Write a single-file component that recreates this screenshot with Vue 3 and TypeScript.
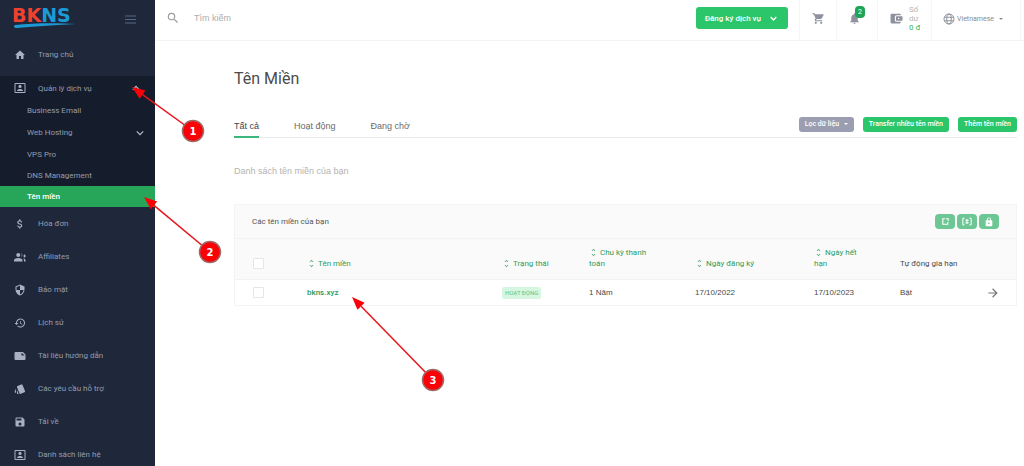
<script setup lang="ts">
import { ref } from 'vue'

interface MenuItem {
  label: string
  icon: string
}

interface SubItem {
  label: string
  active?: boolean
  expandable?: boolean
}

interface Marker {
  n: number
  x: number
  y: number
  tipX: number
  tipY: number
}

const icons: Record<string, string> = {
  home: 'M10 20v-6h4v6h5v-8h3L12 3 2 12h3v8z',
  contact: 'M21 2H3a2 2 0 0 0-2 2v16a2 2 0 0 0 2 2h18a2 2 0 0 0 2-2V4a2 2 0 0 0-2-2zm0 18H3V4h18v16zM12 12a3.2 3.2 0 1 0 0-6.400 3.200 3.200 0 0 0 0 6.400zm6 5.500c0-2.500-4-3.700-6-3.700s-6 1.200-6 3.700V18h12z',
  dollar: 'M11.800 10.900c-2.270-.59-3-1.200-3-2.150 0-1.090 1.010-1.850 2.700-1.850 1.780 0 2.440.85 2.500 2.100h2.210c-.07-1.720-1.120-3.300-3.210-3.810V3h-3v2.160c-1.940.42-3.500 1.680-3.500 3.610 0 2.310 1.910 3.460 4.700 4.130 2.500.6 3 1.480 3 2.410 0 .69-.49 1.790-2.700 1.790-2.060 0-2.870-.92-2.980-2.100h-2.200c.12 2.190 1.760 3.420 3.680 3.830V21h3v-2.150c1.950-.37 3.500-1.500 3.500-3.550 0-2.840-2.430-3.810-4.700-4.400z',
  affiliates: 'M8.500 12a4 4 0 1 0 0-8 4 4 0 0 0 0 8zm0 2C5.500 14 0 15.500 0 18.500V21h17v-2.500C17 15.500 11.500 14 8.500 14zM14 4.200a6 6 0 0 1 0 7.500 4 4 0 0 0 0-7.500zm4 10.300c1.300 1 2 2.300 2 4V21h3v-2.500c0-2-2.200-3.300-5-4zM20 7v2h-1.500v2H20v2h2v-2h2V9h-2V7z',
  shield: 'M12 1 3 5v6c0 5.550 3.840 10.740 9 12 5.160-1.260 9-6.450 9-12V5l-9-4zm0 10.990h7c-.53 4.120-3.280 7.790-7 8.940V12H5V6.300l7-3.110v8.800z',
  history: 'M13 3a9 9 0 0 0-9 9H1l3.890 3.890.07.14L9 12H6a7 7 0 1 1 2.060 4.940l-1.420 1.420A9 9 0 1 0 13 3zm-1 5v5l4.280 2.540.72-1.210-3.500-2.080V8H12z',
  note: 'M3 4a2 2 0 0 0-2 2v12a2 2 0 0 0 2 2h18a2 2 0 0 0 2-2V9l-5-5H3zm12 1.500L21.500 11H15z',
  tickets: 'M2.500 19.600l1.400.6v-9L1.400 17c-.4 1 .1 2.200 1.100 2.600zM22 15.900 17.100 4a2 2 0 0 0-2.600-1.100L7.100 6A2 2 0 0 0 6 8.500l5 12a2 2 0 0 0 2.600 1.100l7.400-3.100a2 2 0 0 0 1-2.600zM5.900 19.800c0 1.100.9 2 2 2h1.500l-3.500-8.400z',
  save: 'M17 3H5a2 2 0 0 0-2 2v14a2 2 0 0 0 2 2h14a2 2 0 0 0 2-2V7l-4-4zm-5 16a3 3 0 1 1 0-6 3 3 0 0 1 0 6zm3-10H5V5h10v4z',
  search: 'M15.500 14h-.79l-.28-.27A6.470 6.470 0 0 0 16 9.500 6.500 6.500 0 1 0 9.500 16c1.610 0 3.090-.59 4.230-1.570l.27.28v.79l5 4.990L20.490 19l-4.990-5zm-6 0a4.500 4.500 0 1 1 0-9 4.500 4.500 0 0 1 0 9z',
  cart: 'M7 18a2 2 0 1 0 0 4 2 2 0 0 0 0-4zM1 2v2h2l3.600 7.590-1.350 2.450C4.520 15.370 5.480 17 7 17h12v-2H7.420l1.130-2h7.450c.75 0 1.410-.41 1.750-1.030L21.700 4.960A1 1 0 0 0 20.830 4H5.210l-.94-2H1zm16 16a2 2 0 1 0 0 4 2 2 0 0 0 0-4z',
  bell: 'M12 22a2 2 0 0 0 2-2h-4c0 1.100.9 2 2 2zm6-6v-5c0-3.070-1.630-5.640-4.500-6.320V4a1.500 1.500 0 0 0-3 0v.68C7.640 5.360 6 7.920 6 11v5l-2 2v1h16v-1l-2-2z',
  wallet: 'M3 3a2 2 0 0 0-2 2v14a2 2 0 0 0 2 2h15a2 2 0 0 0 2-2v-1h-8a3 3 0 0 1-3-3V9a3 3 0 0 1 3-3h8V5a2 2 0 0 0-2-2zm9 5a1 1 0 0 0-1 1v6a1 1 0 0 0 1 1h11V8zm4 5.500a1.500 1.500 0 1 1 0-3 1.500 1.500 0 0 1 0 3z',
  lock: 'M18 8h-1V6A5 5 0 0 0 7 6v2H6a2 2 0 0 0-2 2v10a2 2 0 0 0 2 2h12a2 2 0 0 0 2-2V10a2 2 0 0 0-2-2zM9 6a3 3 0 0 1 6 0v2H9V6zm3 11a2 2 0 1 1 0-4 2 2 0 0 1 0 4z',
  sort: 'M12 5.830 15.170 9l1.410-1.410L12 3 7.410 7.590 8.830 9 12 5.830zm0 12.340L8.830 15l-1.410 1.410L12 21l4.590-4.590L15.170 15 12 18.170z',
  arrow: 'm12 4-1.410 1.410L16.170 11H4v2h12.170l-5.580 5.590L12 20l8-8z',
}

const subItems: SubItem[] = [
  { label: 'Business Email' },
  { label: 'Web Hosting', expandable: true },
  { label: 'VPS Pro' },
  { label: 'DNS Management' },
  { label: 'Tên miền', active: true },
]

const menu: MenuItem[] = [
  { label: 'Hóa đơn', icon: 'dollar' },
  { label: 'Affiliates', icon: 'affiliates' },
  { label: 'Bảo mật', icon: 'shield' },
  { label: 'Lịch sử', icon: 'history' },
  { label: 'Tài liệu hướng dẫn', icon: 'note' },
  { label: 'Các yêu cầu hỗ trợ', icon: 'tickets' },
  { label: 'Tải về', icon: 'save' },
  { label: 'Danh sách liên hệ', icon: 'contact' },
]

const tabs = ['Tất cả', 'Hoạt động', 'Đang chờ']
const activeTab = ref('Tất cả')
const query = ref('')

const columns = [
  { label: 'Tên miền', key: 'col-name' },
  { label: 'Trạng thái', key: 'col-status' },
  { label: 'Chu kỳ thanh toán', key: 'col-cycle' },
  { label: 'Ngày đăng ký', key: 'col-created' },
  { label: 'Ngày hết hạn', key: 'col-expires' },
]

const domains = [
  { name: 'bkns.xyz', status: 'HOẠT ĐỘNG', cycle: '1 Năm', created: '17/10/2022', expires: '17/10/2023', renew: 'Bật' },
]

const markers: Marker[] = [
  { n: 1, x: 193, y: 131, tipX: 132, tipY: 87 },
  { n: 2, x: 210, y: 252, tipX: 144, tipY: 197 },
  { n: 3, x: 433, y: 380, tipX: 352, tipY: 297 },
]

function geometry(m: Marker) {
  const dx = m.tipX - m.x
  const dy = m.tipY - m.y
  const len = Math.hypot(dx, dy)
  const ux = dx / len
  const uy = dy / len
  const bx = m.tipX - ux * 13
  const by = m.tipY - uy * 13
  return {
    bx,
    by,
    head: `${m.tipX},${m.tipY} ${bx - uy * 5},${by + ux * 5} ${bx + uy * 5},${by - ux * 5}`,
  }
}
</script>

<template>
  <div class="page">
    <aside class="sidebar">
      <div class="brand">
        <a href="#" class="logo" aria-label="BKNS">
          <svg width="68" height="34" viewBox="0 0 68 34">
            <text x="0" y="20" class="logo-text"><tspan fill="#f0412f">BK</tspan><tspan fill="#1c9ad6">NS</tspan></text>
            <path d="M3 23C22 21 45 21 64 22 45 23 25 24 5 26 2 26 1 24 3 23z" fill="#1c9ad6" />
          </svg>
        </a>
        <button class="burger" aria-label="Menu">
          <svg width="11" height="9" viewBox="0 0 11 9"><path d="M0 1h11M0 4.500h11M0 8h11" stroke="#566788" stroke-width="1" /></svg>
        </button>
      </div>
      <nav>
        <a href="#" class="item">
          <svg class="ico" viewBox="0 0 24 24"><path :d="icons.home" /></svg>
          <span>Trang chủ</span>
        </a>
        <div class="group">
          <a href="#" class="item head">
            <svg class="ico" viewBox="0 0 24 24"><path :d="icons.contact" /></svg>
            <span>Quản lý dịch vụ</span>
            <svg class="chev" viewBox="0 0 10 10"><path d="M1 7l4-4 4 4" /></svg>
          </a>
          <a v-for="s in subItems" :key="s.label" href="#" class="sub" :class="{ active: s.active, tall: s.expandable }">
            <span>{{ s.label }}</span>
            <svg v-if="s.expandable" class="chev" viewBox="0 0 10 10"><path d="M1 3l4 4 4-4" /></svg>
          </a>
        </div>
        <a v-for="m in menu" :key="m.label" href="#" class="item">
          <svg class="ico" viewBox="0 0 24 24"><path fill-rule="evenodd" :d="icons[m.icon]" /></svg>
          <span>{{ m.label }}</span>
        </a>
      </nav>
    </aside>

    <div class="content">
      <header class="topbar">
        <label class="search">
          <svg width="14" height="14" viewBox="0 0 24 24"><path :d="icons.search" fill="#9b9b9b" /></svg>
          <input v-model="query" type="text" placeholder="Tìm kiếm" aria-label="Tìm kiếm" />
        </label>
        <button class="order">
          Đăng ký dịch vụ
          <svg width="7" height="7" viewBox="0 0 10 10"><path d="M1 3l4 4 4-4" fill="none" stroke="#fff" stroke-width="2" /></svg>
        </button>
        <button class="cell cart" aria-label="Giỏ hàng">
          <svg width="13" height="13" viewBox="0 0 24 24"><path :d="icons.cart" /></svg>
        </button>
        <button class="cell bell" aria-label="Thông báo">
          <span class="bell-wrap">
            <svg width="13" height="13" viewBox="0 0 24 24"><path :d="icons.bell" /></svg>
            <span class="badge">2</span>
          </span>
        </button>
        <a href="#" class="cell wallet">
          <svg width="13" height="13" viewBox="0 0 24 24"><path fill-rule="evenodd" :d="icons.wallet" /></svg>
          <span class="balance"><span>Số</span><span>dư</span><span class="amount">0 đ</span></span>
        </a>
        <button class="cell lang">
          <svg width="12" height="12" viewBox="0 0 24 24"><g fill="none" stroke="#8f929d" stroke-width="2"><circle cx="12" cy="12" r="10" /><ellipse cx="12" cy="12" rx="4.500" ry="10" /><path d="M3 8.500h18M3 15.500h18" /></g></svg>
          <span>Vietnamese</span>
          <i class="caret"></i>
        </button>
      </header>

      <main>
        <h1>Tên Miền</h1>
        <div class="tabbar">
          <div class="tabs" role="tablist">
            <button v-for="t in tabs" :key="t" role="tab" :aria-selected="t === activeTab" :class="{ on: t === activeTab }" @click="activeTab = t">{{ t }}</button>
          </div>
          <div class="actions">
            <button class="btn grey">Lọc dữ liệu <i class="caret"></i></button>
            <button class="btn">Transfer nhiều tên miền</button>
            <button class="btn">Thêm tên miền</button>
          </div>
        </div>
        <p class="desc">Danh sách tên miền của bạn</p>

        <section class="card">
          <div class="card-head">
            <h2>Các tên miền của bạn</h2>
            <div class="tools">
              <button aria-label="Gia hạn">
                <svg width="9" height="9" viewBox="0 0 10 10"><path d="M4.500 2H2v6h5.500V5.500M5.500 2H8v2.500" fill="none" stroke="#fff" stroke-width="1.200" /></svg>
              </button>
              <button aria-label="Máy chủ tên">
                <svg width="10" height="9" viewBox="0 0 12 10"><path d="M3 1H1v8h2M9 1h2v8H9M4 3.500h4M4 6.500h4M6 2v6" fill="none" stroke="#fff" stroke-width="1.200" /></svg>
              </button>
              <button aria-label="Khóa">
                <svg width="10" height="10" viewBox="0 0 24 24"><path fill-rule="evenodd" :d="icons.lock" fill="#fff" /></svg>
              </button>
            </div>
          </div>
          <table>
            <colgroup>
              <col class="c-check" /><col /><col class="c-status" /><col class="c-cycle" /><col class="c-created" /><col class="c-expires" /><col class="c-renew" /><col class="c-go" />
            </colgroup>
            <thead>
              <tr>
                <th class="check"><input type="checkbox" aria-label="Chọn tất cả" /></th>
                <th v-for="c in columns" :key="c.key" :class="c.key">
                  <a href="#"><svg class="sort" viewBox="6 2 12 20"><path :d="icons.sort" /></svg>{{ c.label }}</a>
                </th>
                <th class="plain">Tự động gia hạn</th>
                <th></th>
              </tr>
            </thead>
            <tbody>
              <tr v-for="d in domains" :key="d.name">
                <td class="check"><input type="checkbox" :aria-label="d.name" /></td>
                <td><a href="#" class="name">{{ d.name }}</a></td>
                <td><span class="status-tag">{{ d.status }}</span></td>
                <td>{{ d.cycle }}</td>
                <td>{{ d.created }}</td>
                <td>{{ d.expires }}</td>
                <td>{{ d.renew }}</td>
                <td><a href="#" :aria-label="'Chi tiết ' + d.name"><svg width="14" height="14" viewBox="0 0 24 24"><path :d="icons.arrow" fill="#777" /></svg></a></td>
              </tr>
            </tbody>
          </table>
        </section>
      </main>
    </div>

    <svg class="markers" width="460" height="400" viewBox="0 0 460 400">
      <g v-for="m in markers" :key="m.n">
        <line :x1="m.x" :y1="m.y" :x2="geometry(m).bx" :y2="geometry(m).by" stroke="#e8141c" stroke-width="1.500" />
        <polygon :points="geometry(m).head" fill="#fb0007" />
        <circle :cx="m.x" :cy="m.y" r="10.500" fill="#fb0007" stroke="#9c6a66" stroke-width="1.500" />
        <text :x="m.x" :y="m.y + 4" class="marker-n">{{ m.n }}</text>
      </g>
    </svg>
  </div>
</template>

<style>
body {
  margin: 0;
  background: #fff;
}
</style>

<style scoped>
.page {
  position: relative;
  display: flex;
  height: 100vh;
  overflow: hidden;
  font-family: Roboto, "Liberation Sans", sans-serif;
  font-size: 8px;
  color: #555;
}
a {
  color: inherit;
  text-decoration: none;
}
button {
  border: 0;
  padding: 0;
  background: none;
  font: inherit;
  color: inherit;
  cursor: pointer;
}
svg {
  display: block;
  flex: none;
}

/* sidebar */
.sidebar {
  flex: none;
  width: 155px;
  background: #1e283a;
  color: #949cb1;
  overflow: hidden;
}
.brand {
  display: flex;
  align-items: center;
  justify-content: space-between;
  height: 38px;
  padding: 0 19px 0 12px;
}
.logo-text {
  font: bold 19px "DejaVu Sans", sans-serif;
}
.item {
  display: flex;
  align-items: center;
  height: 33px;
  padding: 0 11px 0 14px;
  gap: 12px;
}
.ico {
  width: 12px;
  height: 12px;
  fill: #a9b0c4;
}
.group {
  margin-top: 5px;
  background: #151c2b;
}
.item.head {
  height: 24px;
}
.chev {
  width: 8px;
  height: 8px;
  margin-left: auto;
  fill: none;
  stroke: #b9c0d0;
  stroke-width: 1.5;
}
.item.head .chev {
  margin-right: 4px;
}
.sub {
  display: flex;
  align-items: center;
  height: 21px;
  padding: 0 11px 0 27px;
}
.sub.tall {
  height: 23px;
}
.sub.active {
  background: #27a65a;
  color: #fff;
  font-weight: 500;
}

/* top bar */
.content {
  flex: 1;
  min-width: 0;
}
.topbar {
  display: flex;
  align-items: center;
  height: 40px;
  padding-right: 3px;
  border-bottom: 1px solid #f3f3f3;
}
.search {
  flex: 1;
  display: flex;
  align-items: center;
  gap: 14px;
  padding: 0 11px 4px;
}
.search input {
  flex: 1;
  min-width: 0;
  height: 20px;
  border: 0;
  padding: 0;
  outline: 0;
  background: none;
  font: 9px "Liberation Sans", sans-serif;
  color: #555;
}
.search input::placeholder {
  color: #adadad;
  opacity: 1;
}
.order {
  display: flex;
  align-items: center;
  gap: 9px;
  height: 22px;
  margin: 0 11px 4px 0;
  padding: 0 11px 0 9px;
  border-radius: 3px;
  background: #2cc66a;
  color: #fff;
  font-weight: 500;
}
.cell {
  display: flex;
  align-items: center;
  align-self: stretch;
  box-sizing: border-box;
  padding-bottom: 3px;
  border-left: 1px solid #f6f6f6;
  fill: #8f929d;
}
.cart {
  width: 37px;
  justify-content: center;
}
.bell {
  width: 41px;
  padding-left: 11px;
}
.bell-wrap {
  position: relative;
}
.badge {
  position: absolute;
  left: 7px;
  top: -6px;
  width: 10px;
  border-radius: 4px;
  background: #1ea553;
  color: #fff;
  font-size: 7px;
  line-height: 12px;
  text-align: center;
}
.wallet {
  width: 54px;
  padding-left: 12px;
  gap: 6px;
}
.balance {
  display: flex;
  flex-direction: column;
  line-height: 9px;
  color: #b5b5b5;
}
.amount {
  color: #2eb566;
}
.lang {
  width: 90px;
  padding-left: 11px;
  border-right: 1px solid #f6f6f6;
  gap: 2px;
  font-size: 7px;
  color: #8c8c8c;
}
.caret {
  display: inline-block;
  border: 2px solid transparent;
  border-top-color: currentColor;
  border-bottom: 0;
  margin-left: 3px;
  vertical-align: middle;
}

/* main */
main {
  padding: 27px 7px 0 79px;
}
h1 {
  margin: 0;
  font-size: 16px;
  line-height: 22px;
  font-weight: 400;
  color: #4c4c4c;
}
.tabbar {
  display: flex;
  justify-content: space-between;
  align-items: center;
  height: 26px;
  margin-top: 21px;
  border-bottom: 1px solid #e9ebed;
}
.tabs {
  display: flex;
  align-self: stretch;
  gap: 35px;
}
.tabs button {
  margin-bottom: -1px;
  padding-top: 4px;
  border-bottom: 2px solid transparent;
  font: 9px "Liberation Sans", sans-serif;
  color: #6b6b6b;
}
.tabs .on {
  border-color: #3fb57e;
  color: #444;
}
.actions {
  display: flex;
  gap: 9px;
}
.btn {
  height: 15px;
  padding: 0 6px;
  border-radius: 3px;
  background: #2cc66a;
  color: #fff;
  font-size: 7px;
  font-weight: 500;
}
.btn.grey {
  background: #9b9eb0;
}
.desc {
  margin: 27px 0 0;
  font: 9px/12px "Liberation Sans", sans-serif;
  color: #b3b3b3;
}
.card {
  margin-top: 27px;
  border: 1px solid #f4f4f4;
}
.card-head {
  display: flex;
  align-items: center;
  justify-content: space-between;
  height: 33px;
  padding: 0 17px;
  background: #fafafa;
  border-bottom: 1px solid #f3f3f3;
}
h2 {
  margin: 0;
  font-size: 8px;
  font-weight: 400;
  color: #555;
}
.tools {
  display: flex;
  gap: 2px;
}
.tools button {
  display: flex;
  align-items: center;
  justify-content: center;
  width: 20px;
  height: 15px;
  border-radius: 4px;
  background: #6dc794;
}
table {
  width: 100%;
  table-layout: fixed;
  border-collapse: collapse;
}
.c-check { width: 72px; }
.c-status { width: 87px; }
.c-cycle { width: 106px; }
.c-created { width: 119px; }
.c-expires { width: 86px; }
.c-renew { width: 86px; }
.c-go { width: 30px; }
th,
td {
  padding: 0;
  text-align: left;
  font-weight: 400;
  line-height: 11px;
}
th {
  height: 30px;
  padding-bottom: 10px;
  vertical-align: bottom;
  background: #fafafa;
  border-bottom: 1px solid #f3f3f3;
}
th a {
  color: #2c9c60;
}
.col-cycle,
.col-expires {
  padding-right: 40px;
}
td {
  height: 25px;
  vertical-align: middle;
  font-family: "Liberation Sans", sans-serif;
  color: #4a4a4a;
}
.plain {
  color: #4a4a4a;
}
.check {
  padding-left: 18px;
}
.check input {
  display: block;
  appearance: none;
  width: 11px;
  height: 11px;
  margin: 0;
  border: 1px solid #e6e6e6;
  border-radius: 1px;
  background: #fff;
}
.sort {
  display: inline-block;
  width: 5px;
  height: 9px;
  margin: 0 4px 0 2px;
  vertical-align: -2px;
  fill: #5fae84;
}
.name {
  font-family: Roboto, sans-serif;
  font-weight: 500;
  color: #2c9c60;
}
.status-tag {
  display: inline-block;
  padding: 0 3px;
  border-radius: 2px;
  background: #d5f6e1;
  color: #5cc488;
  font-family: Roboto, sans-serif;
  font-size: 6px;
  line-height: 12px;
}
.markers {
  position: absolute;
  left: 0;
  top: 0;
  pointer-events: none;
}
.marker-n {
  fill: #fff;
  font: bold 10px "DejaVu Sans", sans-serif;
  text-anchor: middle;
}
</style>
